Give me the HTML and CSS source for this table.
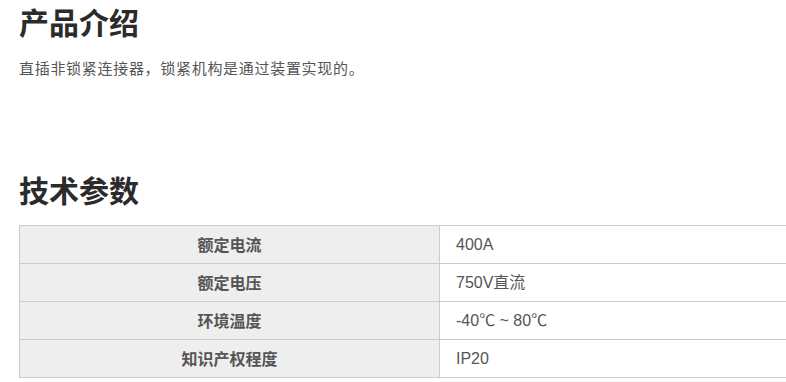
FILE: index.html
```html
<!DOCTYPE html>
<html lang="zh-CN">
<head>
<meta charset="utf-8">
<link rel="stylesheet" href="styles.css">
</head>
<body>
<div class="page">
  <section class="intro">
    <h2 class="title">产品介绍</h2>
    <p class="desc">直插非锁紧连接器，锁紧机构是通过装置实现的。</p>
  </section>
  <section class="params">
    <h2 class="title">技术参数</h2>
    <table class="spec">
      <tr><th>额定电流</th><td>400A</td></tr>
      <tr><th>额定电压</th><td>750V直流</td></tr>
      <tr><th>环境温度</th><td>-40℃ ~ 80℃</td></tr>
      <tr><th>知识产权程度</th><td>IP20</td></tr>
    </table>
  </section>
</div>
</body>
</html>
```
FILE: styles.css
```css
html, body {
  margin: 0;
  padding: 0;
  background: #fff;
  overflow: hidden;
}
body {
  font-family: "Noto Sans CJK SC", "Liberation Sans", sans-serif;
  color: #333;
}
.page {
  padding: 0 0 0 19px;
}
.title {
  margin: 0;
  font-size: 30px;
  font-weight: 700;
  line-height: 42px;
  color: #2b2b2b;
}
.desc {
  margin: 12px 0 0 0;
  font-size: 15px;
  letter-spacing: 0.7px;
  line-height: 28px;
  color: #555;
}
.params {
  margin-top: 86px;
}
.spec {
  margin-top: 15px;
  width: 100%;
  border-collapse: collapse;
  font-size: 16px;
  color: #555;
}
.spec th, .spec td {
  border: 1px solid #ccc;
  height: 37px;
  padding: 0;
  line-height: 37px;
}
.spec td {
  border-right: none;
}
.spec th {
  width: 419px;
  background: #eee;
  font-weight: 700;
  text-align: center;
}
.spec td {
  text-align: left;
  padding-left: 16px;
  font-family: "Liberation Sans", "Noto Sans CJK SC", sans-serif;
}
```
